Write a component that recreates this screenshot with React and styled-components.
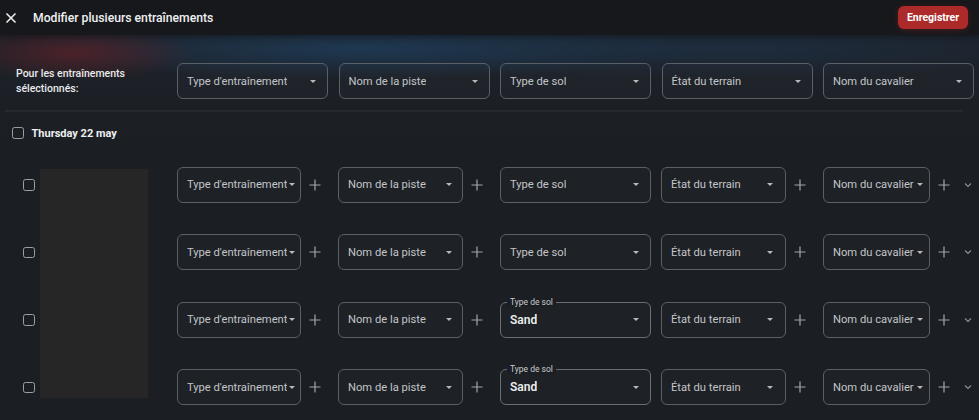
import React from "react";
import styled, { createGlobalStyle } from "styled-components";

const Global = createGlobalStyle`
  html, body { margin: 0; padding: 0; background: #1b1e22; }
  body { font-family: Roboto, "Noto Sans", "Liberation Sans", sans-serif; color: #e6e7e9; overflow: hidden; }
  * { box-sizing: border-box; }
`;

const Page = styled.div`
  width: 979px;
  height: 420px;
  display: flex;
  flex-direction: column;
  overflow: hidden;
`;

const Header = styled.header`
  height: 35px;
  flex: 0 0 35px;
  display: flex;
  align-items: center;
  padding: 0 11px 0 5px;
  background: #16181b;
  box-shadow: 0 2px 6px rgba(0, 0, 0, 0.3);
  position: relative;
  z-index: 2;
`;

const CloseBtn = styled.button`
  width: 12px;
  height: 12px;
  padding: 0;
  margin: 0 16px 0 0;
  border: none;
  background: none;
  display: flex;
  color: #f2f2f2;
`;

const Title = styled.h1`
  margin: 0;
  flex: 1;
  font-size: 12.2px;
  font-weight: 500;
  color: #f1f1f2;
`;

const SaveBtn = styled.button`
  height: 23px;
  width: 70px;
  border: none;
  border-radius: 6px;
  background: #ad2a2b;
  color: #fff;
  font-family: inherit;
  font-size: 10.5px;
  font-weight: 700;
  box-shadow: 0 1px 6px rgba(190, 40, 40, 0.3);
`;

const Content = styled.main`
  flex: 1;
  background:
    radial-gradient(ellipse 120px 28px at 75px 18px, rgba(92, 32, 38, 0.75), transparent 100%),
    radial-gradient(ellipse 340px 30px at 360px 14px, rgba(30, 62, 92, 0.8), transparent 100%),
    radial-gradient(ellipse 360px 30px at 720px 14px, rgba(30, 54, 80, 0.55), transparent 100%),
    linear-gradient(180deg, #1d222a 0px, #1c2026 60px, #1b1e22 140px);
  padding: 28px 5px 0 5px;
`;

const Filters = styled.div`
  display: grid;
  grid-template-columns: 161.5px repeat(5, 151px);
  column-gap: 10.5px;
  align-items: center;
  padding-bottom: 11px;
  border-bottom: 2px solid #262a30;
  width: 958px;
`;

const FilterLabel = styled.div`
  padding-left: 11px;
  font-size: 10.5px;
  line-height: 15px;
  color: #e9eaec;
  font-weight: 500;
  white-space: nowrap;
`;

const SelectBox = styled.div`
  position: relative;
  height: 36px;
  width: ${(p) => p.$w}px;
  flex: 0 0 auto;
  margin-right: ${(p) => p.$mr || 0}px;
  display: flex;
  align-items: center;
  justify-content: space-between;
  padding: 0 ${(p) => p.$pr || 10}px 0 9px;
  border: 1px solid ${(p) => (p.$filled ? "#6a6f76" : "#5b6067")};
  border-radius: 6px;
  background: rgba(255, 255, 255, 0.015);
`;

const SelectText = styled.span`
  white-space: nowrap;
  overflow: hidden;
  font-size: ${(p) => (p.$filled ? 12 : 11.2)}px;
  color: ${(p) => (p.$filled ? "#eceded" : "#c2c5c9")};
  font-weight: ${(p) => (p.$filled ? 600 : 400)};
`;

const Arrow = styled.span`
  flex: 0 0 auto;
  width: 0;
  height: 0;
  border-left: 3.5px solid transparent;
  border-right: 3.5px solid transparent;
  border-top: 3.5px solid #b5b8bc;
`;

const Legend = styled.span`
  position: absolute;
  top: -6px;
  left: 6px;
  padding: 0 3px;
  font-size: 8.5px;
  line-height: 10px;
  color: #c9ccd0;
  background: #1b1e22;
`;

const DateRow = styled.div`
  display: flex;
  align-items: center;
  gap: 8px;
  padding: 8px 0 0 7px;
  height: 34px;
`;

const Check = styled.span`
  width: 11.5px;
  height: 11.5px;
  border: 1.5px solid #9aa0a7;
  border-radius: 2.5px;
  flex: 0 0 auto;
`;

const DateLabel = styled.span`
  font-size: 11px;
  font-weight: 700;
  color: #eeeff0;
`;

const Rows = styled.div`
  display: grid;
  grid-template-columns: 35px 108px 29px auto;
  grid-auto-rows: 67.5px;
  margin-top: 5px;
`;

const RowCheck = styled.div`
  grid-column: 1;
  display: flex;
  align-items: center;
  padding-left: 18px;
`;

const NameBlock = styled.div`
  grid-column: 2;
  grid-row: 1 / span 4;
  margin-top: 18px;
  height: 229px;
  background: #262626;
`;

const Fields = styled.div`
  grid-column: 4;
  display: flex;
  align-items: center;
`;

const PlusBtn = styled.span`
  width: 28px;
  height: 28px;
  margin-right: 9px;
  flex: 0 0 auto;
  display: flex;
  align-items: center;
  justify-content: center;
  color: #a2a6ab;
`;

const Chevron = styled.span`
  display: flex;
  color: #8d9297;
  margin-left: -3px;
`;

const PlusIcon = () => (
  <svg width="12" height="12" viewBox="0 0 12 12">
    <path d="M6 0.5V11.5M0.5 6H11.5" stroke="currentColor" strokeWidth="1.2" />
  </svg>
);

const Select = ({ w, text, filled, legend, mr, pr }) => (
  <SelectBox $w={w} $mr={mr} $pr={pr} $filled={filled}>
    {legend && <Legend>{legend}</Legend>}
    <SelectText $filled={filled}>{text}</SelectText>
    <Arrow />
  </SelectBox>
);

const rows = [
  { sol: null },
  { sol: null },
  { sol: "Sand" },
  { sol: "Sand" },
];

export default function App() {
  return (
    <Page>
      <Global />
      <Header>
        <CloseBtn aria-label="Fermer">
          <svg width="12" height="12" viewBox="0 0 12 12">
            <path d="M1.5 1.5L10.5 10.5M10.5 1.5L1.5 10.5" stroke="currentColor" strokeWidth="1.5" />
          </svg>
        </CloseBtn>
        <Title>Modifier plusieurs entraînements</Title>
        <SaveBtn>Enregistrer</SaveBtn>
      </Header>
      <Content>
        <Filters>
          <FilterLabel>
            Pour les entraînements
            <br />
            sélectionnés:
          </FilterLabel>
          <Select w={151} text="Type d'entraînement" pr={11} />
          <Select w={151} text="Nom de la piste" pr={11} />
          <Select w={151} text="Type de sol" pr={11} />
          <Select w={151} text="État du terrain" pr={11} />
          <Select w={151} text="Nom du cavalier" pr={11} />
        </Filters>
        <DateRow>
          <Check />
          <DateLabel>Thursday 22 may</DateLabel>
        </DateRow>
        <Rows>
          <NameBlock />
          {rows.map((r, i) => (
            <React.Fragment key={i}>
              <RowCheck style={{ gridRow: i + 1 }}>
                <Check />
              </RowCheck>
              <Fields style={{ gridRow: i + 1 }}>
                <Select w={124} text="Type d'entraînement" pr={5} />
                <PlusBtn><PlusIcon /></PlusBtn>
                <Select w={125} text="Nom de la piste" pr={10} />
                <PlusBtn><PlusIcon /></PlusBtn>
                <Select
                  w={151}
                  mr={10}
                  pr={11}
                  text={r.sol || "Type de sol"}
                  filled={!!r.sol}
                  legend={r.sol ? "Type de sol" : null}
                />
                <Select w={125} text="État du terrain" pr={12} />
                <PlusBtn><PlusIcon /></PlusBtn>
                <Select w={107} text="Nom du cavalier" pr={6} />
                <PlusBtn><PlusIcon /></PlusBtn>
                <Chevron>
                  <svg width="8" height="6" viewBox="0 0 8 6">
                    <path d="M1 1.5L4 4.5L7 1.5" fill="none" stroke="currentColor" strokeWidth="1.1" />
                  </svg>
                </Chevron>
              </Fields>
            </React.Fragment>
          ))}
        </Rows>
      </Content>
    </Page>
  );
}
